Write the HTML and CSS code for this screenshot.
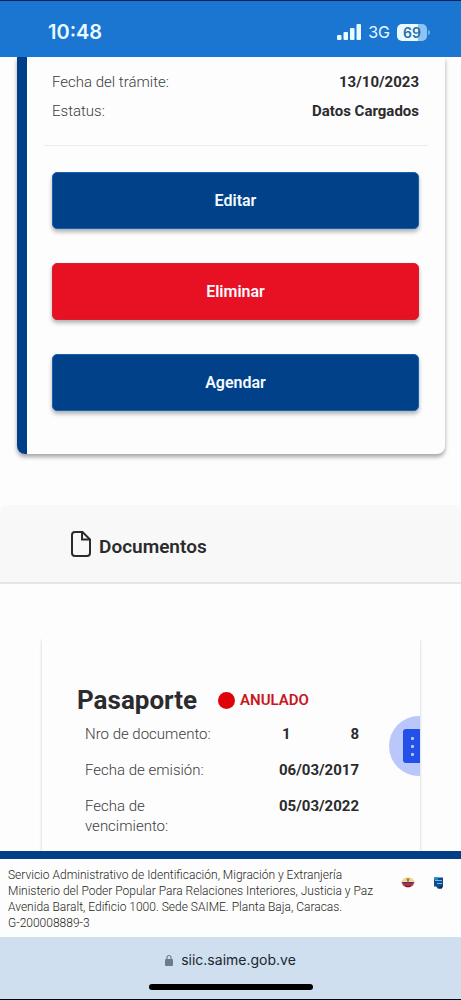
FILE: index.html
```html
<!DOCTYPE html>
<html lang="es">
<head>
<meta charset="utf-8">
<meta name="viewport" content="width=device-width, initial-scale=1">
<title>SAIME</title>
<link rel="stylesheet" href="styles.css">
</head>
<body>
<header class="status-bar">
  <time class="clock">10:48</time>
  <div class="status-icons">
    <svg class="signal" viewBox="0 0 24 16" aria-hidden="true">
      <rect x="0" y="11" width="4.500" height="5" rx="1"/>
      <rect x="6.500" y="8" width="4.500" height="8" rx="1"/>
      <rect x="13" y="4" width="4.500" height="12" rx="1"/>
      <rect x="19.500" y="0" width="4.500" height="16" rx="1"/>
    </svg>
    <span class="network">3G</span>
    <span class="battery"><span class="battery-level">69</span><span class="battery-tip"></span></span>
  </div>
</header>

<main class="content">
  <section class="request-card">
    <dl class="request-data">
      <div class="request-row"><dt>Fecha del trámite:</dt><dd>13/10/2023</dd></div>
      <div class="request-row"><dt>Estatus:</dt><dd>Datos Cargados</dd></div>
    </dl>
    <hr class="divider">
    <div class="actions">
      <button class="btn" type="button">Editar</button>
      <button class="btn btn-danger" type="button">Eliminar</button>
      <button class="btn" type="button">Agendar</button>
    </div>
  </section>

  <div class="section-head">
    <svg class="file-icon" viewBox="0 0 22 28" aria-hidden="true">
      <path d="M5 2H12.500L20 9.500V23a3 3 0 0 1-3 3H5a3 3 0 0 1-3-3V5a3 3 0 0 1 3-3Z"/>
      <path d="M12 2V9.500H20"/>
    </svg>
    <h2 class="section-title">Documentos</h2>
  </div>

  <section class="doc-card">
    <div class="doc-head">
      <h3 class="doc-title">Pasaporte</h3>
      <span class="doc-state"><span class="state-dot"></span>ANULADO</span>
    </div>
    <dl class="doc-data">
      <div class="doc-row"><dt>Nro de documento:</dt><dd class="masked"><span>1</span><span>8</span></dd></div>
      <div class="doc-row"><dt>Fecha de emisión:</dt><dd>06/03/2017</dd></div>
      <div class="doc-row"><dt>Fecha de vencimiento:</dt><dd>05/03/2022</dd></div>
    </dl>
    <button class="more" type="button" aria-label="Más opciones">
      <svg class="more-icon" viewBox="0 0 34 34" aria-hidden="true">
        <rect width="34" height="34" rx="3" fill="#2450ea"/>
        <g fill="#b9c8ff"><rect x="8" y="8" width="3" height="3" rx="1"/><rect x="8" y="16" width="3" height="3" rx="1"/><rect x="8" y="24" width="3" height="3" rx="1"/></g>
      </svg>
    </button>
  </section>
</main>

<footer class="site-footer">
  <p class="legal">Servicio Administrativo de Identificación, Migración y Extranjería<br>Ministerio del Poder Popular Para Relaciones Interiores, Justicia y Paz<br>Avenida Baralt, Edificio 1000. Sede SAIME. Planta Baja, Caracas.<br>G-200008889-3</p>
  <div class="logos">
    <svg class="logo" viewBox="0 0 14 14" aria-hidden="true">
      <ellipse cx="7" cy="6" rx="6.500" ry="4.500" fill="#ead9a0"/>
      <path d="M0.500 6H13.500L12 9.500Q7 13.500 2 9.500Z" fill="#c4374a"/>
      <path d="M2 6H12V7.500H2Z" fill="#463669"/>
      <path d="M5 2H9L8 5H6Z" fill="#d6a22c"/>
      <path d="M4 8L7 10 10 8 9 11H5Z" fill="#731c3c"/>
      <path d="M7 3V8" stroke="#9c3e32"/>
    </svg>
    <svg class="logo" viewBox="0 0 14 14" aria-hidden="true">
      <path d="M3 1.500H12V11L10.500 12.500H7L5 10.500H3Z" fill="#0b4d8e"/>
      <path d="M4 4.500H11M6 7.500H11" stroke="#72b9e7"/>
      <path d="M3 1.500H7V4H3Z" fill="#1689ce"/>
      <path d="M6.500 12.500L11 9.500V12.500Z" fill="#17253e"/>
    </svg>
  </div>
</footer>

<div class="browser-bar">
  <div class="address">
    <svg class="lock" viewBox="0 0 8 12" aria-hidden="true">
      <path d="M2 6V3.500a2 2 0 0 1 4 0V6" fill="none" stroke="#6c7a8c" stroke-width="1.200"/>
      <rect y="5" width="8" height="7" rx="1" fill="#6c7a8c"/>
    </svg>
    <span>siic.saime.gob.ve</span>
  </div>
  <div class="home-indicator"></div>
</div>
</body>
</html>
```
FILE: styles.css
```css
* { box-sizing: border-box; }

body {
  margin: 0;
  height: 100vh;
  display: flex;
  flex-direction: column;
  background: #fdfdfd;
  color: #2b2b2d;
  font-family: Roboto, "Liberation Sans", sans-serif;
  font-size: 15px;
}

h2, h3, p, dl, dd { margin: 0; }

button {
  border: 0;
  padding: 0;
  font: inherit;
}

.status-bar {
  flex: none;
  height: 57px;
  padding: 6px 31px 0 48px;
  display: flex;
  align-items: center;
  justify-content: space-between;
  border-top: 1px solid #06245a;
  background: #1b76d2;
  color: #e9fbff;
  font-family: Inter, sans-serif;
}

.clock {
  font-size: 20px;
  font-weight: 600;
}

.status-icons {
  display: flex;
  align-items: center;
  gap: 7px;
}

.signal {
  width: 24px;
  height: 16px;
  fill: #e9fbff;
}

.network { font-size: 16px; }

.battery {
  display: flex;
  align-items: center;
  gap: 1px;
}

.battery-level {
  width: 30px;
  border-radius: 5px;
  background: linear-gradient(90deg, #e9fbff 69%, #8fc3f2 69%);
  color: #2a6da8;
  font-size: 14px;
  font-weight: 600;
  line-height: 17px;
  text-align: center;
}

.battery-tip {
  width: 2px;
  height: 5px;
  border-radius: 0 2px 2px 0;
  background: #72afe9;
}

.content {
  flex: 1;
  min-height: 0;
  overflow: hidden;
}

.request-card {
  margin: 0 16px 0 17px;
  padding: 11px 17px 43px;
  border-left: 10px solid #003f88;
  border-radius: 0 0 8px 8px;
  box-shadow: 0 3px 4px rgba(0, 0, 0, .35);
}

.request-data, .actions { padding: 0 9px 0 8px; }

.request-row {
  display: flex;
  justify-content: space-between;
  line-height: 29px;
}

dt {
  color: #3c3c3e;
  font-weight: 300;
}

dd { font-weight: 700; }

.divider {
  margin: 19px 0 26px;
  border: 0;
  border-top: 1px solid #ececec;
}

.actions {
  display: flex;
  flex-direction: column;
  gap: 34px;
}

.btn {
  height: 57px;
  border: 1px solid #1561ab;
  border-radius: 5px;
  background: #00418a;
  box-shadow: 0 3px 4px rgba(0, 0, 0, .3);
  color: #f4faff;
  font-size: 16px;
  font-weight: 600;
}

.btn-danger {
  border-color: #d3202e;
  background: #e81123;
}

.section-head {
  margin-top: 51px;
  padding: 24px 70px 23px;
  display: flex;
  align-items: center;
  gap: 7px;
  border-bottom: 2px solid #e5e5e5;
  border-radius: 8px 8px 0 0;
  background: #f8f8f8;
}

.file-icon {
  width: 22px;
  height: 28px;
  fill: none;
  stroke: #2b2b2d;
  stroke-width: 2;
}

.section-title {
  padding-top: 6px;
  font-size: 19px;
  font-weight: 600;
  line-height: 24px;
}

.doc-card {
  position: relative;
  min-height: 260px;
  margin: 53px 41px 0 42px;
  padding: 46px 61px 0 35px;
  overflow: hidden;
  box-shadow: 0 3px 3px rgba(0, 0, 0, .2);
}

.doc-head {
  display: flex;
  align-items: center;
  gap: 21px;
}

.doc-title {
  font-size: 26px;
  font-weight: 700;
  line-height: 34px;
}

.doc-state {
  display: flex;
  align-items: center;
  gap: 5px;
  color: #c9161d;
  font-weight: 600;
}

.state-dot {
  width: 17px;
  height: 17px;
  border-radius: 50%;
  background: #df0209;
}

.doc-data {
  padding-left: 8px;
  display: grid;
  gap: 16px;
  margin-top: 7px;
}

.doc-row {
  display: flex;
  justify-content: space-between;
  line-height: 20px;
}

.doc-row dt { max-width: 130px; }

.masked {
  width: 77px;
  display: flex;
  justify-content: space-between;
}

.more {
  position: absolute;
  top: 79px;
  right: -29px;
  width: 60px;
  height: 60px;
  padding-left: 14px;
  border-radius: 50%;
  background: #b9c7fb;
}

.more-icon {
  display: block;
  width: 34px;
  height: 34px;
}

.site-footer {
  flex: none;
  padding: 8px 16px 6px 8px;
  display: flex;
  justify-content: space-between;
  border-top: 8px solid #003f88;
  background: #fdfdfd;
}

.legal {
  color: #1f1f22;
  font-size: 12px;
  font-weight: 300;
  line-height: 16px;
  white-space: nowrap;
}

.logos {
  display: flex;
  gap: 16px;
  padding-top: 9px;
}

.logo {
  width: 14px;
  height: 14px;
}

.browser-bar {
  flex: none;
  height: 63px;
  padding: 13px 0 9px;
  display: flex;
  flex-direction: column;
  align-items: center;
  justify-content: space-between;
  border-bottom: 1px solid #05070c;
  background: #cfdff0;
}

.address {
  display: flex;
  align-items: center;
  gap: 8px;
  color: #20262d;
  font-family: Inter, sans-serif;
  font-size: 14px;
  line-height: 20px;
}

.lock {
  width: 8px;
  height: 12px;
}

.home-indicator {
  width: 164px;
  height: 6px;
  border-radius: 3px;
  background: #000;
}
```
